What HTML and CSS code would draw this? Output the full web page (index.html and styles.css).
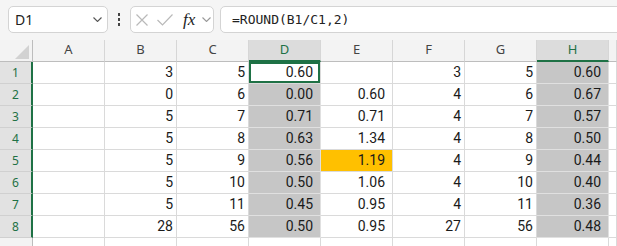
FILE: index.html
```html
<!DOCTYPE html>
<html lang="en">
<head>
    <meta charset="UTF-8">
    <title>Sheet1 - ROUND</title>
    <link rel="stylesheet" href="styles.css">
</head>
<body>

    <div class="toolbar">
        <div class="name-box">
            <span>D1</span>
            <svg class="chev" width="9" height="5" viewBox="0 0 9 5"><polyline points="0.5,0.5 4.5,4.5 8.5,0.5"/></svg>
        </div>
        <div class="dots"><span></span><span></span><span></span></div>
        <div class="fx-box">
            <svg class="cancel" width="12" height="12" viewBox="0 0 12 12"><path d="M0.5 0.5 L11.5 11.5 M11.5 0.5 L0.5 11.5"/></svg>
            <svg class="enter" width="16" height="12" viewBox="0 0 16 12"><polyline points="0.5,6 5.5,11 15.5,0.5"/></svg>
            <i class="fx">fx</i>
            <svg class="chev light" width="9" height="5" viewBox="0 0 9 5"><polyline points="0.5,0.5 4.5,4.5 8.5,0.5"/></svg>
        </div>
        <div class="formula">=ROUND(B1/C1,2)</div>
    </div>

    <div class="sheet" id="sheet"></div>

    <script>
        const cols = ["A", "B", "C", "D", "E", "F", "G", "H"];
        const picked = ["D", "H"];
        const decimal = ["D", "E", "H"];
        const data = [
            ["", 3, 5, "0.60", "", 3, 5, "0.60"],
            ["", 0, 6, "0.00", "0.60", 4, 6, "0.67"],
            ["", 5, 7, "0.71", "0.71", 4, 7, "0.57"],
            ["", 5, 8, "0.63", "1.34", 4, 8, "0.50"],
            ["", 5, 9, "0.56", "1.19", 4, 9, "0.44"],
            ["", 5, 10, "0.50", "1.06", 4, 10, "0.40"],
            ["", 5, 11, "0.45", "0.95", 4, 11, "0.36"],
            ["", 28, 56, "0.50", "0.95", 27, 56, "0.48"],
            ["", "", "", "", "", "", "", ""]
        ];

        let html = `<div class="corner"><span class="tri"></span></div>`;
        cols.forEach(c => {
            html += `<div class="col-head ${picked.includes(c) ? "sel" : ""}">${c}</div>`;
        });
        html += `<div class="col-head"></div>`;

        data.forEach((row, r) => {
            let inSel = r < 8;
            // row 9 is only a sliver at the bottom, its number is below the fold
            html += `<div class="row-head ${inSel ? "sel" : ""}">${inSel ? r + 1 : ""}</div>`;
            row.forEach((value, i) => {
                let c = cols[i];
                let cls = "cell";
                if (decimal.includes(c)) cls += " dec";
                if (inSel && picked.includes(c)) cls += (r === 0 && c === "D") ? " active" : " picked";
                if (r === 4 && c === "E") cls += " hot";
                html += `<div class="${cls}">${value}</div>`;
            });
            html += `<div class="cell"></div>`;
        });

        document.getElementById("sheet").innerHTML = html;
    </script>

</body>
</html>
```

FILE: styles.css
```css
body {
    margin: 0;
    padding: 0;
    background: white;
    font-family: 'Noto Sans', sans-serif;
    overflow: hidden;
}
.toolbar {
    display: flex;
    align-items: flex-start;
    height: 40px;
    box-sizing: border-box;
    padding: 6px 0 0 8px;
    background: #f5f5f5;
}
.name-box, .fx-box, .formula {
    height: 27px;
    box-sizing: border-box;
    background: white;
    border: 1px solid #d4d4d4;
    border-radius: 5px;
    display: flex;
    align-items: center;
}
.name-box {
    width: 100px;
    justify-content: space-between;
    padding: 0 5px 0 6px;
    font-size: 14px;
    color: #222;
}
.chev polyline {
    fill: none;
    stroke: #555;
    stroke-width: 1.1;
}
.chev.light polyline {
    stroke: #999;
}
.dots {
    width: 22px;
    height: 27px;
    display: flex;
    flex-direction: column;
    align-items: center;
    justify-content: center;
    gap: 2px;
}
.dots span {
    width: 2px;
    height: 3px;
    background: #444;
}
.fx-box {
    width: 84px;
    padding-left: 5px;
}
.cancel path, .enter polyline {
    fill: none;
    stroke: #b9b9b9;
    stroke-width: 1.2;
}
.enter {
    margin-left: 9px;
}
.fx {
    margin-left: 10px;
    width: 15px;
    font-family: 'Liberation Serif', serif;
    font-size: 17px;
    color: #222;
    line-height: 1;
}
.fx-box .chev {
    margin-left: 4px;
}
.formula {
    flex: 1;
    margin-left: 6px;
    margin-right: -8px;
    padding-left: 11px;
    font-family: 'DejaVu Sans Mono', monospace;
    font-size: 13px;
    color: #222;
}
.sheet {
    display: grid;
    grid-template-columns: 33px repeat(8, 72px) 1fr;
    grid-auto-rows: 22px;
}
.sheet > div {
    box-sizing: border-box;
    white-space: nowrap;
    overflow: hidden;
}
.corner {
    background: #f3f3f3;
    border-right: 1px solid #bdbdbd;
    border-bottom: 1px solid #bdbdbd;
    display: flex;
    align-items: flex-end;
    justify-content: flex-end;
    padding: 0 3px 2px 0;
}
.tri {
    width: 0;
    height: 0;
    border-left: 14px solid transparent;
    border-bottom: 14px solid #d2d2d2;
}
.col-head {
    background: #f3f3f3;
    border-right: 1px solid #d6d6d6;
    border-bottom: 1px solid #bdbdbd;
    text-align: center;
    font-size: 13px;
    line-height: 19px;
    color: #444;
}
.col-head.sel {
    background: #dcdcdc;
    color: #1e7145;
    border-bottom: 2px solid #1e7145;
}
.row-head {
    background: #f3f3f3;
    border-right: 1px solid #bdbdbd;
    border-bottom: 1px solid #d0d0d0;
    text-align: center;
    font-size: 12px;
    line-height: 22px;
    color: #444;
}
.row-head.sel {
    background: #e2e2e2;
    color: #1e7145;
    border-right: 2px solid #1e7145;
}
.cell {
    border-right: 1px solid #dadada;
    border-bottom: 1px solid #dadada;
    font-family: Roboto, sans-serif;
    font-size: 14px;
    line-height: 21px;
    text-align: right;
    padding-right: 3px;
    color: #1a1a1a;
}
.cell.dec {
    padding-right: 7px;
}
.cell.picked {
    background: #c6c6c6;
    border-color: #e0e0e0;
}
.cell.active {
    box-shadow: inset 0 0 0 2px #1e7145;
}
.cell.hot {
    background: #ffc000;
}
```
